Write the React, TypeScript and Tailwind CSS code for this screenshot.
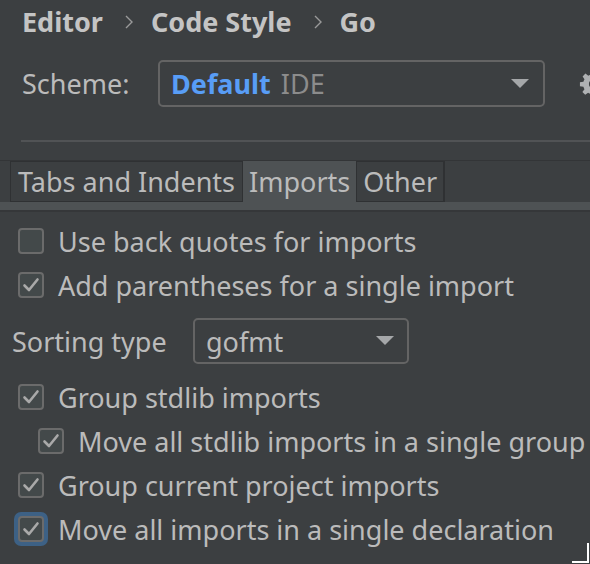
import React from 'react';

const Chevron = () => (
  <svg width="10" height="16" viewBox="0 0 10 16" className="ml-[21px] mr-[17px] mt-[2px] shrink-0">
    <path d="M2 2 L8 8 L2 14" fill="none" stroke="#9a9a9a" strokeWidth="1.4" />
  </svg>
);

const Caret = () => (
  <svg width="18" height="10" viewBox="0 0 18 10">
    <path d="M0 0 H18 L9 9 Z" fill="#a5a7a9" />
  </svg>
);

const Gear = () => (
  <svg width="28" height="28" viewBox="0 0 24 24" className="shrink-0">
    <path
      fill="#afb1b3"
      fillRule="evenodd"
      d="M10.3 1h3.4l.5 3a8 8 0 0 1 2 .9l2.5-1.8 2.4 2.4-1.8 2.5a8 8 0 0 1 .9 2l3 .5v3.4l-3 .5a8 8 0 0 1-.9 2l1.8 2.5-2.4 2.4-2.5-1.8a8 8 0 0 1-2 .9l-.5 3h-3.4l-.5-3a8 8 0 0 1-2-.9l-2.5 1.8-2.4-2.4 1.8-2.5a8 8 0 0 1-.9-2l-3-.5v-3.4l3-.5a8 8 0 0 1 .9-2L3.1 5.5l2.4-2.4 2.5 1.8a8 8 0 0 1 2-.9zM12 8.5a3.5 3.5 0 1 0 0 7 3.5 3.5 0 0 0 0-7z"
    />
  </svg>
);

const Checkbox = ({ checked, focused }: { checked: boolean; focused?: boolean }) => (
  <div className={`shrink-0 rounded-[7px] p-[4px] -m-[4px] ${focused ? 'bg-[#3d6185]' : ''}`}>
    <div className="w-[26px] h-[26px] rounded-[4px] border-2 border-[#6b6b6b] bg-[#43494a] flex items-center justify-center">
      {checked && (
        <svg width="18" height="16" viewBox="0 0 18 16">
          <path d="M2.5 8.5 L7 13 L15.5 2.5" fill="none" stroke="#a9a9a9" strokeWidth="2.6" strokeLinecap="round" strokeLinejoin="round" />
        </svg>
      )}
    </div>
  </div>
);

const Option = ({ label, checked, focused, indent }: { label: string; checked: boolean; focused?: boolean; indent?: boolean }) => (
  <div className={`h-[44px] flex items-center ${indent ? 'pl-[38px]' : 'pl-[18px]'}`}>
    <Checkbox checked={checked} focused={focused} />
    <span className="ml-[14px] whitespace-nowrap">{label}</span>
  </div>
);

export default function App() {
  return (
    <div className="w-[590px] h-[564px] overflow-hidden relative bg-[#3c3f41] text-[#bbbbbb] text-[27px] leading-none font-['Noto_Sans',sans-serif]">
      {/* Breadcrumb */}
      <div className="h-[42px] pl-[22px] flex items-center font-bold text-[#c4c4c4] whitespace-nowrap">
        <span>Editor</span>
        <Chevron />
        <span>Code Style</span>
        <Chevron />
        <span>Go</span>
      </div>

      {/* Scheme */}
      <div className="mt-[18px] flex items-center pl-[22px] whitespace-nowrap">
        <span className="w-[136px] shrink-0">Scheme:</span>
        <div className="w-[387px] h-[47px] shrink-0 rounded-[5px] border-2 border-[#646464] flex items-center pl-[11px] pr-[14px]">
          <span className="font-bold text-[#589df6]">Default</span>
          <span className="ml-[10px] text-[#8c8c8c]">IDE</span>
          <span className="ml-auto"><Caret /></span>
        </div>
        <div className="ml-[34px] shrink-0"><Gear /></div>
      </div>

      <div className="mt-[33px] ml-[21px] h-[2px] bg-[#515355]" />

      {/* Tabs */}
      <div className="mt-[18px] border-t border-[#333537]">
        <div className="h-[41px] flex pl-[10px] whitespace-nowrap">
          <div className="h-full px-[7px] flex items-center border border-[#2f3133] bg-[#3c3f41]">Tabs and Indents</div>
          <div className="h-full px-[6px] flex items-center bg-[#4e5254]">Imports</div>
          <div className="h-full px-[6px] flex items-center border border-[#2f3133] bg-[#3c3f41]">Other</div>
          <div className="flex-1 border-l border-[#2f3133]" />
        </div>
        <div className="h-[8px] bg-[#4e5254]" />
        <div className="h-[2px] bg-[#353739]" />
      </div>

      {/* Options */}
      <div className="mt-[7px]">
        <Option label="Use back quotes for imports" checked={false} />
        <Option label="Add parentheses for a single import" checked />
        <div className="h-[68px] flex items-center pl-[12px] whitespace-nowrap">
          <span className="w-[181px] shrink-0">Sorting type</span>
          <div className="w-[216px] h-[46px] shrink-0 rounded-[5px] border-2 border-[#646464] flex items-center pl-[11px] pr-[13px]">
            <span>gofmt</span>
            <span className="ml-auto"><Caret /></span>
          </div>
        </div>
        <Option label="Group stdlib imports" checked />
        <Option label="Move all stdlib imports in a single group" checked indent />
        <Option label="Group current project imports" checked />
        <Option label="Move all imports in a single declaration" checked focused />
      </div>

      {/* resize corner */}
      <div className="absolute left-[572px] top-[543px] w-[17px] h-[20px] border-r-2 border-b-2 border-white" />
      <div className="absolute left-[570px] top-[541px] w-[21px] h-[24px] border-r border-b border-black pointer-events-none" />
    </div>
  );
}
